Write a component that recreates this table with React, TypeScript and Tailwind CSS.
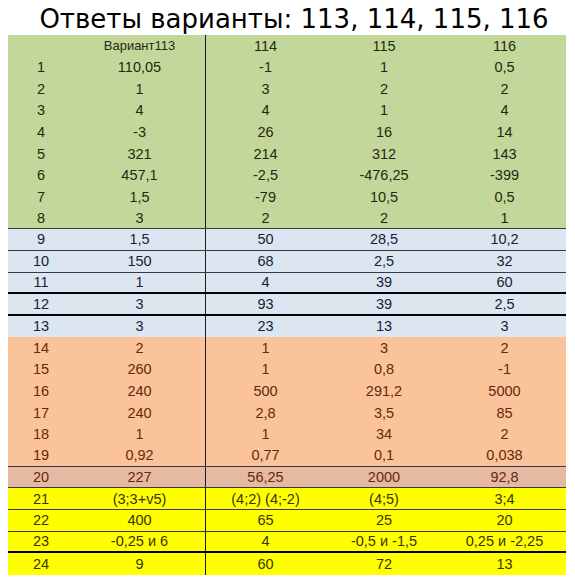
import React from 'react'

type Row = {
  n: string
  v: [string, string, string, string]
  bg: string
  fg: string
  line?: string
}

const green = 'bg-[#c4d79b]'
const blue = 'bg-[#dce6f1]'
const orange = 'bg-[#fac39a]'
const tan = 'bg-[#e6b9a3]'
const yellow = 'bg-[#ffff00]'

const gText = 'text-[#1e2b0c]'
const bText = 'text-[#18213a]'
const oText = 'text-[#66280c]'
const yText = 'text-[#36340e]'

const thin = 'border-b border-[#3a3a3a]'
const thick = 'border-b-2 border-black'

const rows: Row[] = [
  { n: '1', v: ['110,05', '-1', '1', '0,5'], bg: green, fg: gText },
  { n: '2', v: ['1', '3', '2', '2'], bg: green, fg: gText },
  { n: '3', v: ['4', '4', '1', '4'], bg: green, fg: gText },
  { n: '4', v: ['-3', '26', '16', '14'], bg: green, fg: gText },
  { n: '5', v: ['321', '214', '312', '143'], bg: green, fg: gText },
  { n: '6', v: ['457,1', '-2,5', '-476,25', '-399'], bg: green, fg: gText },
  { n: '7', v: ['1,5', '-79', '10,5', '0,5'], bg: green, fg: gText },
  { n: '8', v: ['3', '2', '2', '1'], bg: green, fg: gText, line: thin },
  { n: '9', v: ['1,5', '50', '28,5', '10,2'], bg: blue, fg: bText, line: thin },
  { n: '10', v: ['150', '68', '2,5', '32'], bg: blue, fg: bText, line: thin },
  { n: '11', v: ['1', '4', '39', '60'], bg: blue, fg: bText, line: thick },
  { n: '12', v: ['3', '93', '39', '2,5'], bg: blue, fg: bText, line: thick },
  { n: '13', v: ['3', '23', '13', '3'], bg: blue, fg: bText },
  { n: '14', v: ['2', '1', '3', '2'], bg: orange, fg: oText },
  { n: '15', v: ['260', '1', '0,8', '-1'], bg: orange, fg: oText },
  { n: '16', v: ['240', '500', '291,2', '5000'], bg: orange, fg: oText },
  { n: '17', v: ['240', '2,8', '3,5', '85'], bg: orange, fg: oText },
  { n: '18', v: ['1', '1', '34', '2'], bg: orange, fg: oText },
  { n: '19', v: ['0,92', '0,77', '0,1', '0,038'], bg: orange, fg: oText, line: thin },
  { n: '20', v: ['227', '56,25', '2000', '92,8'], bg: tan, fg: oText, line: thin },
  { n: '21', v: ['(3;3+v5)', '(4;2) (4;-2)', '(4;5)', '3;4'], bg: yellow, fg: yText, line: thin },
  { n: '22', v: ['400', '65', '25', '20'], bg: yellow, fg: yText, line: thin },
  { n: '23', v: ['-0,25 и 6', '4', '-0,5 и -1,5', '0,25 и -2,25'], bg: yellow, fg: yText, line: thick },
  { n: '24', v: ['9', '60', '72', '13'], bg: yellow, fg: yText },
]

function TableRow({ row, header }: { row: Row; header?: boolean }) {
  return (
    <div className={`flex h-[21.6px] items-center ${row.bg} ${row.fg} ${row.line ?? ''}`}>
      <div className="w-[66px] text-center">{row.n}</div>
      <div className={`w-[131px] text-center ${header ? 'text-[13px]' : ''}`}>{row.v[0]}</div>
      <div className="w-[120px] self-stretch flex items-center justify-center border-l border-[#1a1a1a]">
        {row.v[1]}
      </div>
      <div className="w-[118px] text-center">{row.v[2]}</div>
      <div className="w-[123px] text-center">{row.v[3]}</div>
    </div>
  )
}

export default function App() {
  const header: Row = { n: '', v: ['Вариант113', '114', '115', '116'], bg: green, fg: gText }
  return (
    <div className="w-[575px] h-[581px] bg-white overflow-hidden">
      <div className="h-[35px] flex items-center justify-center pl-[13px] pt-[2px] text-black text-[26px] leading-none font-['DejaVu_Sans',sans-serif]">
        Ответы варианты: 113, 114, 115, 116
      </div>
      <div className="ml-[8px] w-[558px] text-[14.5px] leading-none font-['Liberation_Sans',Arial,sans-serif]">
        <TableRow row={header} header />
        {rows.map((r) => (
          <TableRow key={r.n} row={r} />
        ))}
      </div>
    </div>
  )
}
